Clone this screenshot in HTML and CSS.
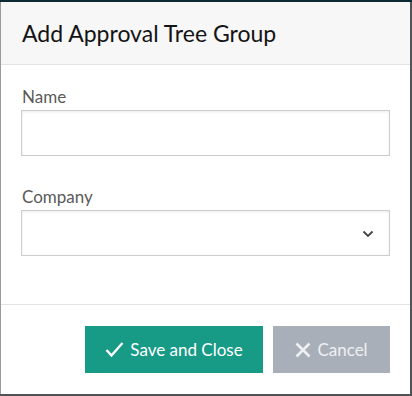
FILE: index.html
```html
<!DOCTYPE html>
<html lang="en">

<head>
    <meta charset="UTF-8">
    <meta name="viewport" content="width=device-width, initial-scale=1.0">
    <title>Add Approval Tree Group</title>
    <link rel="stylesheet" href="styles.css">
</head>

<body>
    <div id="modal">
        <div class="modal-header">
            <h2>Add Approval Tree Group</h2>
        </div>
        <div class="modal-body">
            <div class="field">
                <label for="name">Name</label>
                <input type="text" id="name" class="control">
            </div>
            <div class="field">
                <label for="company">Company</label>
                <div class="select-wrap">
                    <select id="company" class="control">
                        <option></option>
                    </select>
                    <svg class="chevron" width="12" height="8" viewBox="0 0 12 8">
                        <path d="M1.5 1.5 L6 6 L10.5 1.5" fill="none" stroke="#444" stroke-width="1.8"/>
                    </svg>
                </div>
            </div>
        </div>
        <div class="modal-footer">
            <button class="btn btn-save">
                <svg width="19" height="17" viewBox="0 0 19 17">
                    <path d="M1.5 9 L6.5 14.5 L17.5 2" fill="none" stroke="#fff" stroke-width="2.4"/>
                </svg>
                Save and Close
            </button>
            <button class="btn btn-cancel">
                <svg width="16" height="16" viewBox="0 0 16 16">
                    <path d="M1.5 1.5 L14.5 14.5 M14.5 1.5 L1.5 14.5" fill="none" stroke="#eef0f3" stroke-width="2.6"/>
                </svg>
                Cancel
            </button>
        </div>
    </div>
</body>

</html>
```

FILE: styles.css
```css
* {
    box-sizing: border-box;
}

body {
    margin: 0;
    height: 396px;
    overflow: hidden;
    background-color: #4f5355;
    border-top: 2px solid #0c2a32;
    font-family: Lato, 'Open Sans', sans-serif;
}

#modal {
    width: 410px;
    height: 392px;
    background-color: #fff;
    border-left: 1px solid #9a9a9a;
    display: flex;
    flex-direction: column;
}

.modal-header {
    height: 63px;
    background-color: #f7f7f7;
    border-bottom: 1px solid #e3e3e3;
    display: flex;
    align-items: center;
    padding: 0 21px;
}

.modal-header h2 {
    margin: 0;
    font-size: 23px;
    font-weight: 400;
    color: #141414;
}

.modal-body {
    padding: 21px 20px 0 20px;
    height: 240px;
    border-bottom: 1px solid #e3e3e3;
}

.field {
    margin-bottom: 30px;
}

.field label {
    display: block;
    font-size: 17px;
    color: #5a5a5a;
    margin-bottom: 3px;
    padding-left: 1px;
}

.control {
    display: block;
    width: 369px;
    height: 46px;
    border: 1px solid #cdcdcd;
    background-color: #fff;
    box-shadow: inset 0 1px 3px rgba(0, 0, 0, 0.08);
    font-size: 16px;
    outline: none;
    appearance: none;
    -webkit-appearance: none;
    border-radius: 0;
}

.select-wrap {
    position: relative;
}

.chevron {
    position: absolute;
    right: 16px;
    top: 20px;
}

.modal-footer {
    flex: 1;
    display: flex;
    justify-content: flex-end;
    align-items: flex-start;
    gap: 10px;
    padding: 21px 20px 0 0;
}

.btn {
    height: 47px;
    border: none;
    border-radius: 0;
    color: #fff;
    font-family: Lato, 'Open Sans', sans-serif;
    font-size: 17px;
    display: flex;
    align-items: center;
    justify-content: center;
    gap: 6px;
}

.btn-save {
    width: 178px;
    background-color: #179a86;
}

.btn-cancel {
    width: 117px;
    background-color: #a9afb9;
    color: #eef0f3;
}
```
